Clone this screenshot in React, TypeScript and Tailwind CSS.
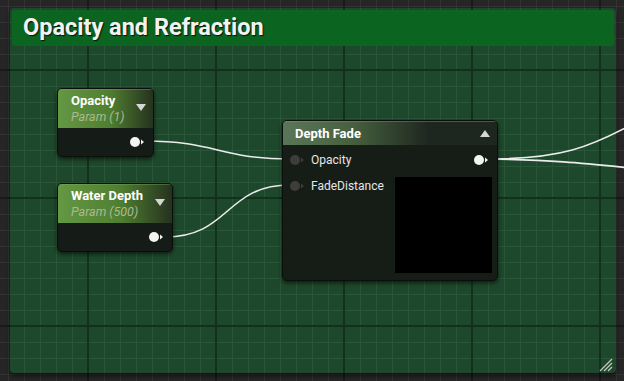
import React from "react";

const font = { fontFamily: "Roboto, 'Noto Sans', sans-serif" };

function Pin({ filled, className = "" }: { filled?: boolean; className?: string }) {
  return (
    <svg width="15" height="10" viewBox="0 0 15 10" className={`shrink-0 ${className}`}>
      <circle cx="5" cy="5" r="5" fill={filled ? "#f4f4f4" : "#3d3d3d"} />
      <polygon points="11,2.5 14,5 11,7.5" fill={filled ? "#f4f4f4" : "#3d3d3d"} />
    </svg>
  );
}

function Tri({ up }: { up?: boolean }) {
  return (
    <svg width="10" height="7" viewBox="0 0 10 7" className="shrink-0">
      <polygon points={up ? "0,7 10,7 5,0" : "0,0 10,0 5,7"} fill="#d6d6d6" />
    </svg>
  );
}

function ParamNode({ title, sub, x, y, w }: { title: string; sub: string; x: number; y: number; w: number }) {
  return (
    <div
      className="absolute flex flex-col rounded-[5px] border border-[#0b0f0b] bg-[#151b16] shadow-[0_2px_4px_rgba(0,0,0,0.6)] overflow-hidden"
      style={{ left: x, top: y, width: w, height: 69 }}
    >
      <div className="h-[39px] flex items-start justify-between pl-[13px] pr-[7px] pt-[3px] bg-[linear-gradient(to_right,#649843_0%,#4f7e30_55%,#25321f_100%)] border-t border-[#7fa864]/40">
        <div className="flex flex-col leading-[16px]">
          <span className="text-[13px] font-bold text-white">{title}</span>
          <span className="text-[12.5px] italic text-[#a9ba92]">{sub}</span>
        </div>
        <div className="mt-[11px]">
          <Tri />
        </div>
      </div>
      <div className="flex-1 flex items-center justify-end pr-[8px]">
        <Pin filled />
      </div>
    </div>
  );
}

export default function App() {
  const grid =
    "bg-[linear-gradient(to_right,var(--maj)_2px,transparent_2px),linear-gradient(to_bottom,var(--maj)_2px,transparent_2px),linear-gradient(to_right,var(--min)_1px,transparent_1px),linear-gradient(to_bottom,var(--min)_1px,transparent_1px)] bg-[size:128px_128px,128px_128px,16px_16px,16px_16px] bg-[position:87px_69px,87px_69px,8px_6px,8px_6px] bg-fixed";

  return (
    <div className="w-[624px] h-[381px] relative overflow-hidden" style={font}>
      <div className={`absolute inset-0 bg-[#262626] [--maj:#1a1a1a] [--min:#333333] ${grid}`} />

      {/* comment box */}
      <div
        className={`absolute left-[10px] top-[8px] w-[606px] h-[365px] rounded-[4px] bg-[#1e482b] [--maj:#12301c] [--min:#295538] shadow-[0_3px_4px_rgba(0,0,0,0.55)] ${grid}`}
      >
        <div className="mx-[2px] mt-[2px] h-[36px] rounded-[3px] bg-[#0b6420] flex items-center pl-[11px]">
          <span className="text-[23.5px] font-bold text-[#f2f2f2] [text-shadow:1px_1px_1px_rgba(0,0,0,0.8)]">
            Opacity and Refraction
          </span>
        </div>
        <svg width="14" height="14" viewBox="0 0 14 14" className="absolute right-[3px] bottom-[1px]">
          <path d="M1 13 L13 1 M5 13 L13 5 M9 13 L13 9" stroke="#c8c8c8" strokeWidth="1.2" />
        </svg>
      </div>

      {/* wires */}
      <svg width="624" height="381" className="absolute inset-0">
        <g fill="none" stroke="#ececec" strokeWidth="1.6">
          <path d="M145 141 C 215 141, 220 159, 290 159" />
          <path d="M165 237 C 230 237, 225 185, 290 185" />
          <path d="M488 159 C 560 159, 590 148, 640 120" />
          <path d="M488 159 C 560 160, 590 164, 640 169" />
        </g>
      </svg>

      <ParamNode title="Opacity" sub="Param (1)" x={57} y={88} w={97} />
      <ParamNode title="Water Depth" sub="Param (500)" x={57} y={183} w={116} />

      {/* Depth Fade */}
      <div className="absolute left-[282px] top-[120px] w-[216px] h-[161px] flex flex-col rounded-[5px] border border-[#0b0f0b] bg-[#161d17] shadow-[0_2px_4px_rgba(0,0,0,0.6)] overflow-hidden">
        <div className="h-[24px] shrink-0 flex items-center justify-between pl-[12px] pr-[7px] bg-[linear-gradient(to_right,#5a7658_0%,#47613f_32%,#1e271f_68%)] border-t border-[#86a283]/40">
          <span className="text-[13px] font-bold text-white">Depth Fade</span>
          <Tri up />
        </div>
        <div className="flex-1 flex flex-col pt-[6px] pb-[7px] pl-[7px] gap-[8px]">
          <div className="h-[18px] flex items-center pr-[8px]">
            <Pin />
            <span className="ml-[6px] text-[12px] text-[#e6e6e6]">Opacity</span>
            <Pin filled className="ml-auto" />
          </div>
          <div className="flex items-start pr-[5px]">
            <div className="h-[18px] flex items-center">
              <Pin />
              <span className="ml-[6px] text-[12px] text-[#e6e6e6]">FadeDistance</span>
            </div>
            <div className="ml-auto w-[97px] h-[96px] bg-black" />
          </div>
        </div>
      </div>
    </div>
  );
}
